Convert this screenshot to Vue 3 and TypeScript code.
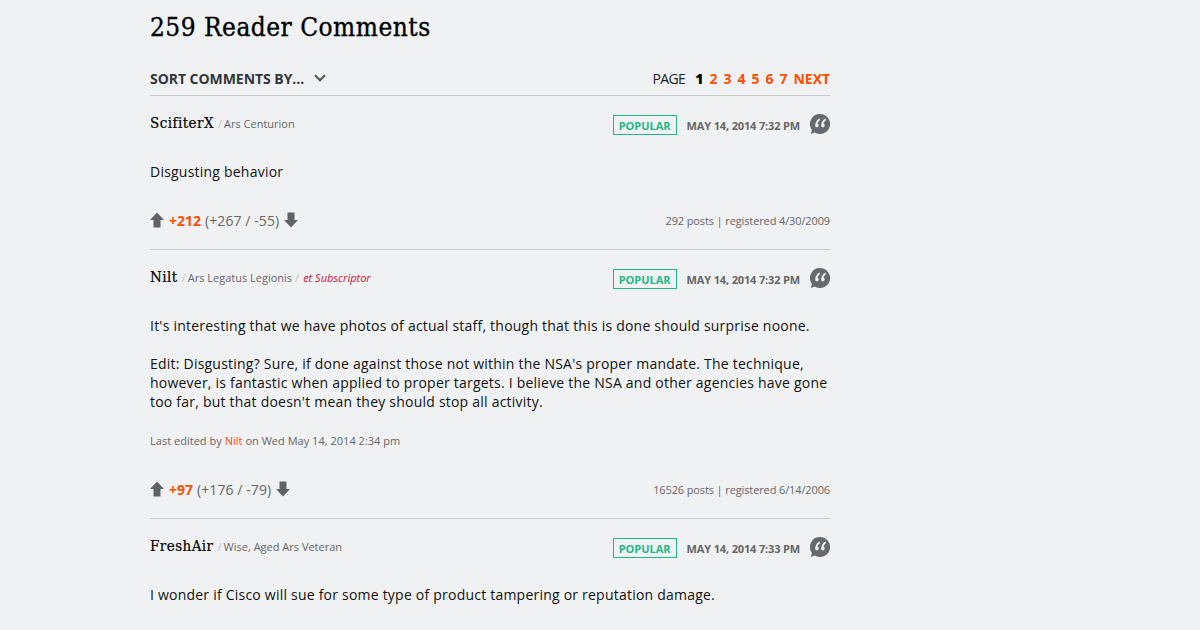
<script setup lang="ts">
interface Comment {
  name: string
  rank: string
  sub?: string
  time: string
  paras: string[]
  edited?: boolean
  score: string
  detail: string
  stats: string
}
const comments: Comment[] = [
  {
    name: 'ScifiterX', rank: 'Ars Centurion', time: 'May 14, 2014 7:32 PM',
    paras: ['Disgusting behavior'], score: '+212', detail: '(+267 / -55)',
    stats: '292 posts | registered 4/30/2009',
  },
  {
    name: 'Nilt', rank: 'Ars Legatus Legionis', sub: 'et Subscriptor', time: 'May 14, 2014 7:32 PM',
    paras: [
      "It's interesting that we have photos of actual staff, though that this is done should surprise noone.",
      "Edit: Disgusting? Sure, if done against those not within the NSA's proper mandate. The technique, however, is fantastic when applied to proper targets. I believe the NSA and other agencies have gone too far, but that doesn't mean they should stop all activity.",
    ],
    edited: true, score: '+97', detail: '(+176 / -79)',
    stats: '16526 posts | registered 6/14/2006',
  },
  {
    name: 'FreshAir', rank: 'Wise, Aged Ars Veteran', time: 'May 14, 2014 7:33 PM',
    paras: ['I wonder if Cisco will sue for some type of product tampering or reputation damage.'],
    score: '', detail: '', stats: '',
  },
]
const pages = ['2', '3', '4', '5', '6', '7']
</script>

<template>
  <main class="page">
    <h1 class="title">259 Reader Comments</h1>
    <div class="toolbar">
      <div class="sort">
        <span>Sort comments by...</span>
        <svg width="12" height="8" viewBox="0 0 12 8"><path d="M1 1.200 6 6.200 11 1.200" fill="none" stroke="#555a60" stroke-width="2.200" /></svg>
      </div>
      <nav class="pager">
        <span class="page-label">Page</span>
        <b class="current">1</b>
        <a v-for="p in pages" :key="p">{{ p }}</a>
        <a class="next">Next</a>
      </nav>
    </div>
    <article v-for="c in comments" :key="c.name" class="comment">
      <header class="head">
        <div class="author">
          <span class="name">{{ c.name }}</span>
          <span class="slash">/</span>
          <span class="rank">{{ c.rank }}</span>
          <template v-if="c.sub">
            <span class="slash">/</span>
            <em class="sub">{{ c.sub }}</em>
          </template>
        </div>
        <div class="meta">
          <span class="badge">Popular</span>
          <time class="time">{{ c.time }}</time>
          <svg class="quote" width="20" height="20" viewBox="0 0 20 20">
            <path d="M10 0a10 10 0 1 1-5.200 18.500L.8 20l1.100-4.100A10 10 0 0 1 10 0Z" fill="#666a6e" />
            <path d="M9.500 4.500c-2.400 1-3.900 3.200-4.300 6.500-.1 1.400.5 2.300 1.600 2.300 1.100 0 1.900-.8 1.900-1.900 0-.9-.5-1.500-1.200-1.700.2-1.200 1-2.300 2.500-3.400ZM15.500 4.500c-2.400 1-3.900 3.200-4.300 6.500-.1 1.400.5 2.300 1.600 2.300 1.100 0 1.900-.8 1.900-1.900 0-.9-.5-1.500-1.200-1.700.2-1.200 1-2.300 2.500-3.400Z" fill="#f0f1f3" />
          </svg>
        </div>
      </header>
      <div class="body">
        <p v-for="(t, i) in c.paras" :key="i">{{ t }}</p>
        <p v-if="c.edited" class="edited">Last edited by <a>Nilt</a> on Wed May 14, 2014 2:34 pm</p>
      </div>
      <footer v-if="c.score" class="foot">
        <div class="votes">
          <svg class="up" width="16" height="16" viewBox="0 0 16 16"><path d="M8 .5 15 8h-3.500v7.500h-7V8H1Z" fill="#5f6367" /></svg>
          <b class="score">{{ c.score }}</b>
          <span class="detail">{{ c.detail }}</span>
          <svg class="down" width="16" height="16" viewBox="0 0 16 16"><path d="M8 15.500 15 8h-3.500V.5h-7V8H1Z" fill="#5f6367" /></svg>
        </div>
        <span class="stats">{{ c.stats }}</span>
      </footer>
    </article>
  </main>
</template>

<style>
html, body { margin: 0; background: #f0f1f3; }
</style>

<style scoped>
.page {
  box-sizing: border-box;
  width: 680px;
  height: 630px;
  margin-left: 150px;
  overflow: hidden;
  font-family: "Open Sans", sans-serif;
  color: #000;
}
.title {
  margin: 0;
  padding-top: 10px;
  font: 400 26px/34px "DejaVu Serif", serif;
  font-stretch: condensed;
  letter-spacing: .48px;
  -webkit-text-stroke: .35px #000;
  color: #000;
}
.toolbar {
  display: flex;
  justify-content: space-between;
  align-items: center;
  margin-top: 25px;
  height: 18px;
  padding-bottom: 8px;
  border-bottom: 1px solid #c9cbce;
}
.sort {
  display: flex;
  align-items: center;
  gap: 10px;
  font-size: 14px;
  font-weight: 700;
  letter-spacing: -.05px;
  text-transform: uppercase;
  color: #33363a;
}
.pager {
  display: flex;
  align-items: center;
  gap: 6px;
  font-size: 14px;
  font-weight: 700;
  text-transform: uppercase;
  color: #ff4e00;
}
.page-label { font-weight: 400; color: #222; margin-right: 4px; letter-spacing: -.6px; }
.current { color: #000; }
.next { letter-spacing: -.05px; }
.comment { border-bottom: 1px solid #c9cbce; }
.comment:last-child { border-bottom: 0; }
.head {
  display: flex;
  justify-content: space-between;
  align-items: center;
  height: 20px;
  padding-top: 19px;
}
.author { display: flex; align-items: baseline; gap: 3px; margin-bottom: 4px; }
.name { font: 400 15px/20px "DejaVu Serif", serif; font-stretch: condensed; letter-spacing: .45px; -webkit-text-stroke: .2px #000; color: #000; margin-right: 1px; }
.slash { font-size: 11px; color: #c0c2c5; }
.rank { font-size: 11px; color: #666; margin-left: -1px; }
.sub { font-size: 11px; color: #d0103a; margin-left: 1px; }
.meta { display: flex; align-items: center; }
.badge {
  box-sizing: border-box;
  height: 20px;
  padding: 0 5px;
  border: 1px solid #1fb88a;
  font-size: 11px;
  line-height: 20px;
  font-weight: 700;
  text-transform: uppercase;
  color: #1fb88a;
}
.time {
  margin-left: 10px;
  margin-right: 10px;
  font-size: 11px;
  font-weight: 700;
  letter-spacing: -.15px;
  text-transform: uppercase;
  color: #666;
}
.quote { margin-bottom: 2px; }
.body { padding-top: 27px; font-size: 14px; line-height: 19px; letter-spacing: .22px; color: #111; }
.body p { margin: 0 0 19px; }
.body .edited { font-size: 11px; letter-spacing: .02px; color: #666; padding-top: 1px; margin-top: 0; }
.edited a { color: #ff4e00; }
.foot {
  display: flex;
  justify-content: space-between;
  align-items: center;
  height: 20px;
  margin-top: 29px;
  padding-bottom: 19px;
}
.votes { display: flex; align-items: center; gap: 3px; font-size: 14px; }
.up { margin-left: -1px; margin-right: 1px; }
.score { color: #ff4e00; font-weight: 700; }
.detail { color: #666; margin-left: 1px; letter-spacing: .08px; }
.down { margin-left: 1px; }
.stats { font-size: 11px; letter-spacing: -.12px; color: #666; }
</style>
